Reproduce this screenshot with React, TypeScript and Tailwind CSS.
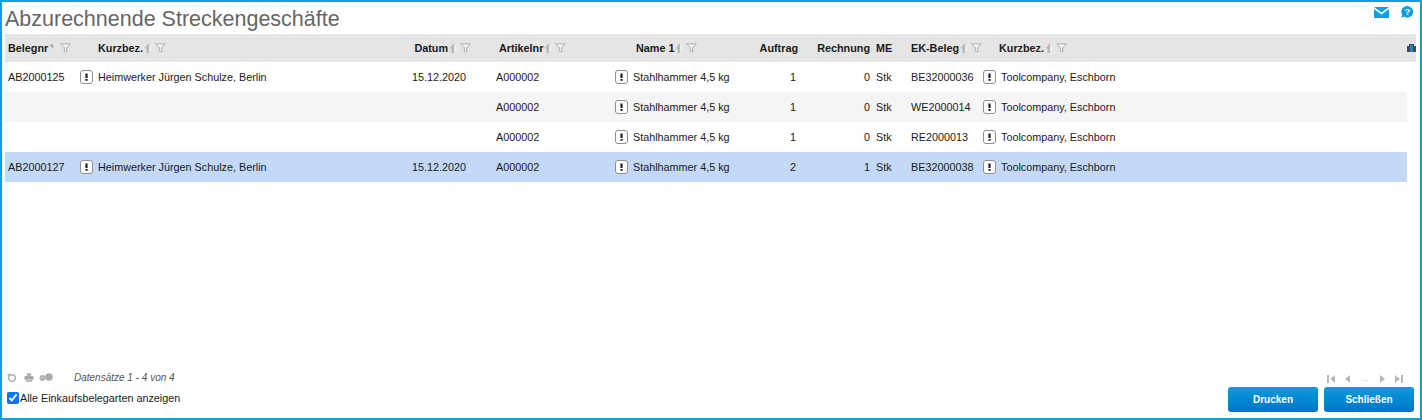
import React from 'react';

const GRID = "grid grid-cols-[72px_329px_70px_139px_120px_65px_71px_35px_77px_1fr] items-center";

function SortIcon({ half }: { half?: boolean }) {
  return (
    <svg width="8" height="11" viewBox="0 0 8 11" className="shrink-0">
      {half ? (
        <path d="M0.5 1.5 L4 1.5 L4.5 6 Z" fill="#a0a0a0" />
      ) : (
        <>
          <path d="M4.5 0.5 L0.5 5.5 L2.5 5.5 L2.5 10 L5 10 L5 0.5 Z" fill="#b9b9b9" />
          <path d="M5.5 2.5 L7.8 5.5 L5.5 8.5 Z" fill="#f6f6f6" />
        </>
      )}
    </svg>
  );
}

function FilterIcon() {
  return (
    <svg width="11" height="10" viewBox="0 0 11 10" className="shrink-0">
      <path d="M0.7 0.8 H10.3 L6.7 4.8 V9 L4.3 8 V4.8 Z" fill="#f1f1f1" stroke="#a8a8a8" strokeWidth="0.9" />
    </svg>
  );
}

function HeadCell({ label, half, className }: { label: string; half?: boolean; className?: string }) {
  return (
    <div className={`flex items-center font-bold text-[10.8px] text-[#1a1a1a] ${className ?? ''}`}>
      <span>{label}</span>
      <span className="ml-[1px]"><SortIcon half={half} /></span>
      <span className="ml-[3px]"><FilterIcon /></span>
    </div>
  );
}

function Excl() {
  return (
    <svg width="13" height="14" viewBox="0 0 13 14" className="shrink-0">
      <rect x="0.5" y="0.5" width="12" height="13" rx="2.5" fill="#fff" stroke="#8f8f8f" />
      <rect x="5.4" y="3.5" width="2.2" height="4.5" fill="#222" />
      <rect x="5.4" y="9" width="2.2" height="1.8" fill="#222" />
    </svg>
  );
}

function IconText({ text, className }: { text: string; className?: string }) {
  return (
    <div className={`flex items-center gap-[5px] ${className ?? ''}`}>
      <Excl />
      <span>{text}</span>
    </div>
  );
}

const rows = [
  { bg: "bg-white", nr: "AB2000125", kurz: "Heimwerker Jürgen Schulze, Berlin", datum: "15.12.2020", auftrag: "1", rech: "0", ek: "BE32000036" },
  { bg: "bg-[#f5f5f5]", nr: "", kurz: "", datum: "", auftrag: "1", rech: "0", ek: "WE2000014" },
  { bg: "bg-white", nr: "", kurz: "", datum: "", auftrag: "1", rech: "0", ek: "RE2000013" },
  { bg: "bg-[#c3d9f7]", nr: "AB2000127", kurz: "Heimwerker Jürgen Schulze, Berlin", datum: "15.12.2020", auftrag: "2", rech: "1", ek: "BE32000038" },
];

function PrinterIcon() {
  return (
    <svg width="10" height="9" viewBox="0 0 11 10">
      <path d="M3 0.5 H8 V3 H3 Z" fill="#a3a3a3" />
      <path d="M0.5 3.5 H10.5 V7.5 H0.5 Z" fill="#a3a3a3" />
      <path d="M2.5 6 H8.5 V9.5 H2.5 Z" fill="#c4c4c4" stroke="#a3a3a3" strokeWidth="0.7" />
    </svg>
  );
}

function PagerIcon({ d }: { d: string }) {
  return (
    <svg width="8" height="8" viewBox="0 0 8 8">
      <path d={d} fill="#b8b8b8" />
    </svg>
  );
}

export default function App() {
  return (
    <div className="flex h-[420px] w-[1422px] flex-col border-2 border-[#0d9fe0] bg-white font-['Liberation_Sans',Arial,sans-serif] text-[10.8px] text-[#1a1a1a]">
      <div className="flex h-[32px] shrink-0 items-start justify-between pl-[3px]">
        <h1 className="pt-[5px] text-[21.5px] font-normal leading-[25px] text-[#666]">Abzurechnende Streckengeschäfte</h1>
        <div className="flex items-center gap-[11px] pr-[6px] pt-[3px]">
          <svg width="15" height="11" viewBox="0 0 15 11">
            <path d="M0 0 H15 L7.5 5.5 Z" fill="#0d9fe0" />
            <path d="M0 2 L7.5 7.5 L15 2 V11 H0 Z" fill="#0d9fe0" />
          </svg>
          <svg width="14" height="14" viewBox="0 0 14 14">
            <path d="M7.5 1 A5.8 5.8 0 1 1 4 11.5 L1 13 L2.2 9.8 A5.8 5.8 0 0 1 7.5 1 Z" fill="#0d9fe0" />
            <text x="7.5" y="10" textAnchor="middle" fontSize="9" fontWeight="700" fill="#fff">?</text>
          </svg>
        </div>
      </div>

      <div className="ml-[3px] mr-[4px] shrink-0">
        <div className={`relative h-[28px] bg-[#e5e5e5] ${GRID}`}>
          <HeadCell label="Belegnr" half className="pl-[3px]" />
          <HeadCell label="Kurzbez." className="pl-[21px]" />
          <HeadCell label="Datum" className="justify-end pr-[5px]" />
          <HeadCell label="Artikelnr" className="pl-[23px]" />
          <HeadCell label="Name 1" className="pl-[21px]" />
          <div className="pr-[2px] text-right font-bold">Auftrag</div>
          <div className="pr-[1px] text-right font-bold">Rechnung</div>
          <div className="pl-[5px] font-bold">ME</div>
          <HeadCell label="EK-Beleg" className="whitespace-nowrap pl-[5px]" />
          <HeadCell label="Kurzbez." className="pl-[16px]" />
          <svg width="9" height="8" viewBox="0 0 9 8" className="absolute right-0 top-[10px]">
            <rect x="0" y="0" width="9" height="8" fill="#3f4a55" />
            <rect x="0" y="0" width="2" height="2" fill="#e5e5e5" />
            <rect x="7" y="0" width="2" height="2" fill="#e5e5e5" />
            <rect x="3" y="1" width="3" height="7" fill="#1c86c8" />
          </svg>
        </div>

        <div className="mr-[9px]">
          {rows.map((r, i) => (
            <div key={i} className={`h-[30px] ${r.bg} ${GRID}`}>
              <div className="pl-[3px]">{r.nr}</div>
              <div className="pl-[3px]">{r.kurz && <IconText text={r.kurz} />}</div>
              <div className="pr-[10px] text-right">{r.datum}</div>
              <div className="pl-[20px]">A000002</div>
              <IconText text="Stahlhammer 4,5 kg" className="whitespace-nowrap" />
              <div className="pr-[4px] text-right">{r.auftrag}</div>
              <div className="pr-[1px] text-right">{r.rech}</div>
              <div className="pl-[5px]">Stk</div>
              <div className="pl-[5px]">{r.ek}</div>
              <IconText text="Toolcompany, Eschborn" className="whitespace-nowrap" />
            </div>
          ))}
        </div>
      </div>

      <div className="mt-auto flex items-start justify-between pb-[6px] pl-[4px] pr-[6px]">
        <div className="flex flex-col">
          <div className="flex h-[16px] items-center">
            <svg width="10" height="10" viewBox="0 0 10 10" className="ml-[1px] mt-[1px]">
              <circle cx="5" cy="5" r="3.3" fill="none" stroke="#b0b0b0" strokeWidth="1.5" />
              <path d="M0 2 L3 0 L3 4 Z" fill="#b0b0b0" />
            </svg>
            <span className="ml-[7px] mt-[1px]"><PrinterIcon /></span>
            <svg width="14" height="9" viewBox="0 0 14 9" className="ml-[5px]">
              <circle cx="3.5" cy="5" r="3" fill="#b4b4b4" />
              <circle cx="10" cy="4" r="3.8" fill="#ababab" />
            </svg>
            <span className="ml-[21px] text-[10px] italic text-[#555]">Datensätze 1 - 4 von 4</span>
          </div>
          <label className="mt-[5px] flex items-center pl-[1px] text-[10.8px] text-[#1a1a1a]">
            <input type="checkbox" readOnly checked className="m-0 h-[12px] w-[12px] accent-[#0075ff]" />
            <span className="ml-[1px]">Alle Einkaufsbelegarten anzeigen</span>
          </label>
        </div>
        <div className="flex flex-col items-end">
          <div className="flex h-[16px] items-center gap-[9px] pr-[11px] pt-[3px]">
            <PagerIcon d="M0 0 H2 V8 H0 Z M8 0 V8 L3 4 Z" />
            <PagerIcon d="M6 0 V8 L1 4 Z" />
            <span className="text-[9px] leading-none text-[#bbb]">...</span>
            <PagerIcon d="M2 0 V8 L7 4 Z" />
            <PagerIcon d="M0 0 V8 L5 4 Z M6 0 H8 V8 H6 Z" />
          </div>
          <div className="mt-[2px] flex gap-[6px]">
            <button className="h-[25px] w-[90px] rounded-[3px] bg-gradient-to-b from-[#0a9bdc] to-[#0074c8] text-[10px] font-bold text-white">Drucken</button>
            <button className="h-[25px] w-[90px] rounded-[3px] bg-gradient-to-b from-[#0a9bdc] to-[#0074c8] text-[10px] font-bold text-white">Schließen</button>
          </div>
        </div>
      </div>
    </div>
  );
}
